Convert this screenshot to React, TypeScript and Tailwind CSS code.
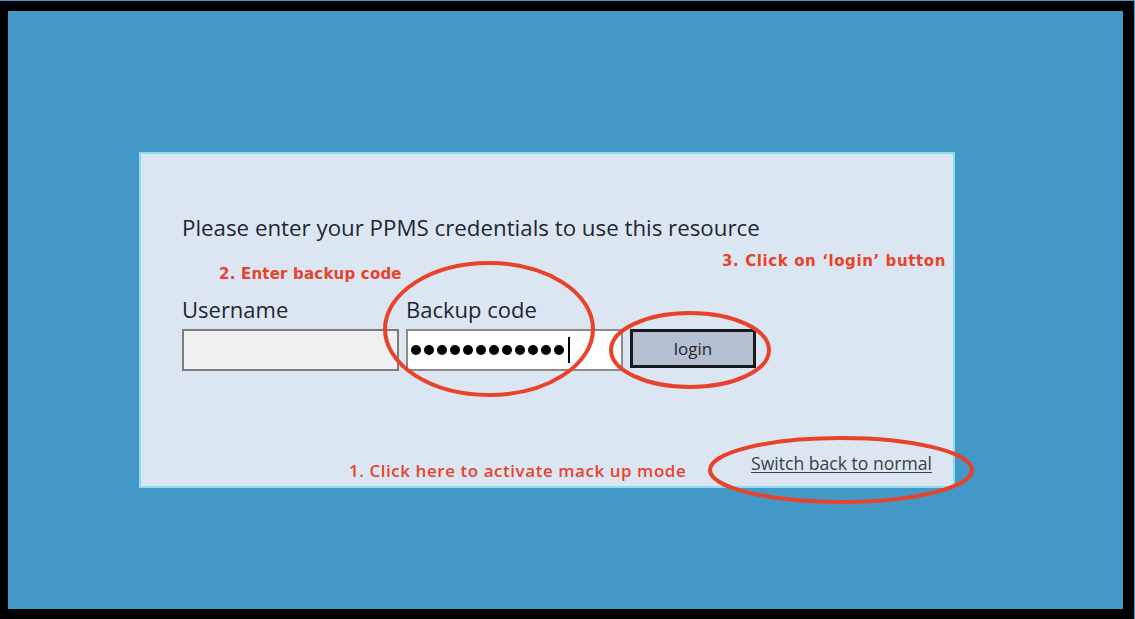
import React from 'react';

const ui = "font-['Open_Sans',sans-serif]";
const note = "font-['DejaVu_Sans',sans-serif] font-bold text-[#e8432a] whitespace-nowrap";

const App: React.FC = () => {
  return (
    <div className="relative w-[1135px] h-[619px] bg-black border-t border-r border-[#4398c8] flex pt-[10px] pl-[8px] pr-[11px] pb-[10px]">
      <div className="flex-1 bg-[#4398c8] pt-[141px] pl-[131px]">
        {/* login panel */}
        <div className="relative w-[816px] h-[336px] bg-[#dce6f2] border-2 border-[#8fdcec] pl-[41px] pt-[59px]">
          <p className={`${ui} text-[22.3px] leading-[30px] text-[#1e2630]`}>
            Please enter your PPMS credentials to use this resource
          </p>

          <div className="flex gap-[7px] mt-[51px]">
            <div className="flex flex-col w-[217px]">
              <span className={`${ui} text-[22px] leading-[30px] text-[#1e2630] mb-[5px]`}>Username</span>
              <div className="h-[42px] bg-[#f0f0f0] border-2 border-[#7c7c7c]" />
            </div>
            <div className="flex flex-col w-[217px]">
              <span className={`${ui} text-[22px] leading-[30px] text-[#1e2630] mb-[5px]`}>Backup code</span>
              <div className="h-[42px] bg-white border-2 border-[#8a8a8a] flex items-center pl-[3px] gap-[3px]">
                {Array.from({ length: 12 }).map((_, i) => (
                  <span key={i} className="w-[10px] h-[10px] rounded-full bg-black" />
                ))}
                <span className="ml-[1px] w-[2px] h-[26px] bg-black" />
              </div>
            </div>
            <div className="flex flex-col justify-end">
              <button className={`${ui} w-[126px] h-[39px] mb-[3px] bg-[#b5c1d1] border-[3px] border-[#161a1f] text-[17px] text-[#1e2630] flex items-center justify-center`}>
                login
              </button>
            </div>
          </div>

          <a className={`${ui} absolute left-[610px] top-[298px] text-[17.6px] leading-[22px] text-[#3a3f46] underline underline-offset-2`}>
            Switch back to normal
          </a>

          {/* annotations */}
          <span className={`${note} absolute left-[78px] top-[109px] text-[15px] leading-[22px] tracking-[0.2px]`}>2. Enter backup code</span>
          <span className={`${note} absolute left-[581px] top-[96px] text-[15px] leading-[22px] tracking-[0.6px]`}>3. Click on ‘login’ button</span>
          <span className={`${ui} font-semibold text-[#e8432a] whitespace-nowrap absolute left-[208px] top-[305px] text-[17px] leading-[24px] tracking-[0.55px]`}>1. Click here to activate mack up mode</span>
        </div>
      </div>

      <svg className="absolute left-0 top-0 pointer-events-none" width="1135" height="619" viewBox="0 0 1135 619">
        <g fill="none" stroke="#e8432a" strokeWidth="4">
          <ellipse cx="489" cy="328" rx="104" ry="66" />
          <ellipse cx="690" cy="349" rx="79" ry="37" />
          <ellipse cx="841" cy="469" rx="131" ry="32" />
        </g>
      </svg>
    </div>
  );
};

export default App;
